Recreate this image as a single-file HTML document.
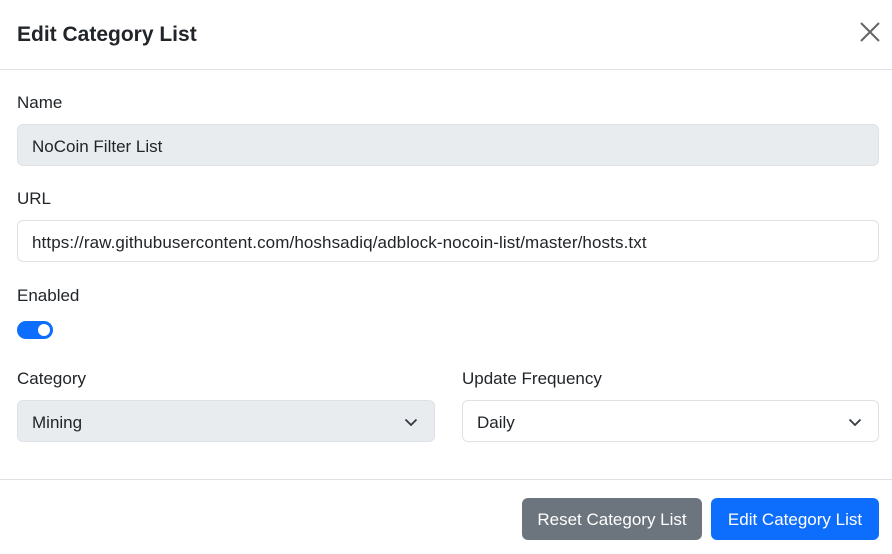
<!DOCTYPE html>
<html><head><style>
*{box-sizing:border-box;margin:0;padding:0}
body{width:892px;height:554px;background:#fff;font-family:"Liberation Sans",sans-serif;color:#212529;position:relative;overflow:hidden;font-size:17px}
.a{position:absolute}
.t{position:absolute;left:17px;font-size:21px;font-weight:bold;top:23px;color:#212529}
.hr{position:absolute;left:0;right:0;height:1px;background:#dee2e6}
.l{position:absolute;left:17px;font-size:17px;line-height:20px}
.in{position:absolute;height:42px;border:1px solid #dee2e6;border-radius:6px;padding-left:14px;line-height:43px;font-size:17px}
.btn{position:absolute;top:498px;height:42px;border-radius:6px;color:#fff;line-height:43px;text-align:center;font-size:17px}
</style></head><body>
<div class="t">Edit Category List</div>
<svg class="a" style="left:860px;top:22px" width="20" height="20" viewBox="0 0 20 20"><path d="M1 1L19 19M19 1L1 19" stroke="#666" stroke-width="2"/></svg>
<div class="hr" style="top:69px"></div>
<div class="l" style="top:93px">Name</div>
<div class="in" style="left:17px;width:862px;top:124px;background:#e9ecef">NoCoin Filter List</div>
<div class="l" style="top:189px">URL</div>
<div class="in" style="left:17px;width:862px;top:220px;letter-spacing:0.1px">https://raw.githubusercontent.com/hoshsadiq/adblock-nocoin-list/master/hosts.txt</div>
<div class="l" style="top:286px">Enabled</div>
<div class="a" style="left:17px;top:321px;width:36px;height:18px;border-radius:9px;background:#0d6efd"></div>
<div class="a" style="left:38px;top:324px;width:12px;height:12px;border-radius:6px;background:#fff"></div>
<div class="l" style="top:369px">Category</div>
<div class="l" style="top:369px;left:462px">Update Frequency</div>
<div class="in" style="left:17px;width:418px;top:400px;background:#e9ecef">Mining</div>
<div class="in" style="left:462px;width:417px;top:400px">Daily</div>
<svg class="a" style="left:404px;top:417px" width="14" height="10" viewBox="0 0 14 10"><path d="M1.5 2.5L7 8L12.5 2.5" fill="none" stroke="#343a40" stroke-width="1.8"/></svg>
<svg class="a" style="left:848px;top:417px" width="14" height="10" viewBox="0 0 14 10"><path d="M1.5 2.5L7 8L12.5 2.5" fill="none" stroke="#343a40" stroke-width="1.8"/></svg>
<div class="hr" style="top:479px"></div>
<div class="btn" style="left:522px;width:180px;background:#6c757d">Reset Category List</div>
<div class="btn" style="left:711px;width:168px;background:#0d6efd">Edit Category List</div>
</body></html>
